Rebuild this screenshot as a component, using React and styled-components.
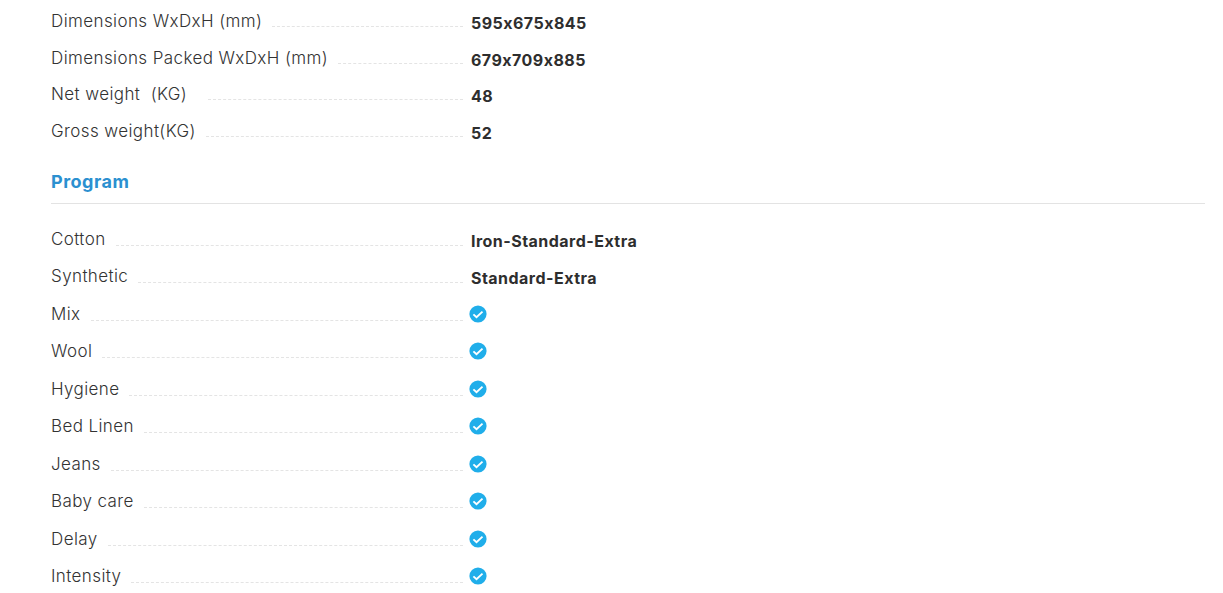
import React from "react";
import styled, { createGlobalStyle } from "styled-components";

const Global = createGlobalStyle`
  html, body { margin: 0; padding: 0; background: #fff; overflow: hidden; }
  body { font-family: Inter, "Liberation Sans", sans-serif; color: #3a3a3a; font-feature-settings: "calt" 0; }
`;
const Page = styled.div`
  padding: 9px 18px 0 51px;
  height: 584px;
  overflow: hidden;
`;
const Section = styled.div`
  display: flex;
  flex-direction: column;
`;
const Row = styled.div`
  display: flex;
  align-items: flex-start;
  height: ${(p) => p.$h}px;
`;
const LabelCell = styled.div`
  width: 412px;
  display: flex;
  align-items: flex-end;
  height: 24px;
  flex: none;
`;
const Label = styled.span`
  font-size: 17px;
  font-weight: 300;
  line-height: 24px;
  letter-spacing: 0.4px;
  white-space: pre;
  color: #333;
`;
const Leader = styled.span`
  flex: 1;
  margin-left: 10px;
  border-bottom: 1px dashed #e4e4e4;
  margin-bottom: ${(p) => p.$lift}px;
`;
const Value = styled.div`
  margin-left: 8px;
  margin-top: 2px;
  font-size: 16px;
  font-weight: 700;
  line-height: 24px;
  letter-spacing: 0.47px;
  color: #2e2e2e;
`;
const CheckWrap = styled.div`
  margin-left: 5.5px;
  margin-top: 3px;
  width: 18px;
  height: 18px;
`;
const Heading = styled.h3`
  margin: 14px 0 0;
  font-size: 18px;
  font-weight: 700;
  line-height: 24px;
  letter-spacing: 0.5px;
  color: #2b90d0;
`;
const Rule = styled.div`
  height: 1px;
  background: #e3e3e3;
  margin: 9px 0 23px;
`;

const Check = () => (
  <CheckWrap>
    <svg width="18" height="18" viewBox="0 0 18 18">
      <circle cx="9" cy="9" r="8.6" fill="#20aeea" />
      <path d="M4.4 9.4 L7.5 12.3 L13.5 6.6" fill="none" stroke="#fff" strokeWidth="1.9" />
    </svg>
  </CheckWrap>
);

const Item = ({ label, value, h, lift }) => (
  <Row $h={h}>
    <LabelCell>
      <Label>{label}</Label>
      <Leader $lift={lift} />
    </LabelCell>
    {value ? <Value>{value}</Value> : <Check />}
  </Row>
);

const top = [
  ["Dimensions WxDxH (mm)", "595x675x845"],
  ["Dimensions Packed WxDxH (mm)", "679x709x885"],
  ["Net weight  (KG)  ", "48"],
  ["Gross weight(KG)", "52"],
];
const program = [
  ["Cotton", "Iron-Standard-Extra"],
  ["Synthetic", "Standard-Extra"],
  ["Mix"],
  ["Wool"],
  ["Hygiene"],
  ["Bed Linen"],
  ["Jeans"],
  ["Baby care"],
  ["Delay"],
  ["Intensity"],
];

export default function App() {
  return (
    <Page>
      <Global />
      <Section>
        {top.map(([l, v]) => (
          <Item key={l} label={l} value={v} h={36.7} lift={6} />
        ))}
      </Section>
      <Heading>Program</Heading>
      <Rule />
      <Section>
        {program.map(([l, v]) => (
          <Item key={l} label={l} value={v} h={37.5} lift={5} />
        ))}
      </Section>
    </Page>
  );
}
